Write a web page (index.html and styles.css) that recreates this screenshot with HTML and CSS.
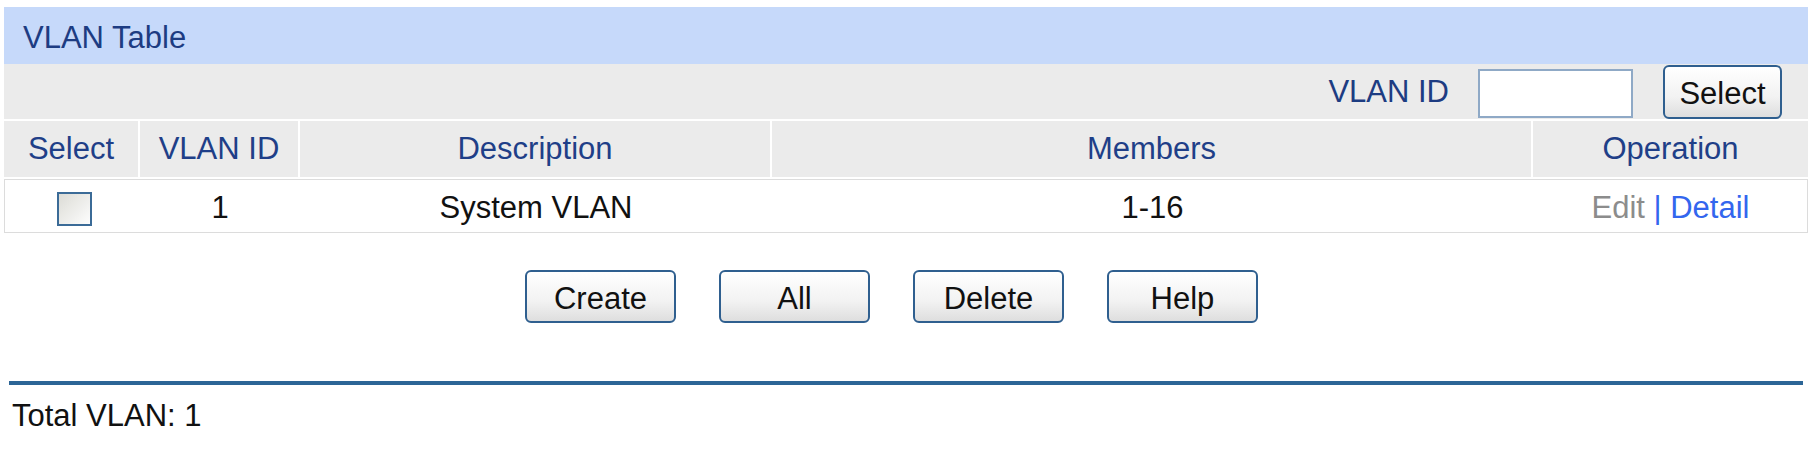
FILE: index.html
```html
<!DOCTYPE html>
<html>
<head>
    <title>VLAN Table</title>
    <meta charset="UTF-8">
    <link rel="stylesheet" href="styles.css">
</head>
<body>
    <div class="panel">
        <div class="title">VLAN Table</div>

        <div class="search">
            <label for="vlan-id" class="search-label">VLAN ID</label>
            <input type="text" id="vlan-id" class="search-input">
            <button class="btn btn-select">Select</button>
        </div>

        <div class="grid head">
            <div>Select</div>
            <div>VLAN ID</div>
            <div>Description</div>
            <div>Members</div>
            <div>Operation</div>
        </div>

        <div class="grid row">
            <div><span class="check"></span></div>
            <div>1</div>
            <div>System VLAN</div>
            <div>1-16</div>
            <div class="ops"><span class="edit">Edit</span> <span class="sep">|</span> <a class="detail">Detail</a></div>
        </div>
    </div>

    <div class="actions">
        <button class="btn">Create</button>
        <button class="btn">All</button>
        <button class="btn">Delete</button>
        <button class="btn">Help</button>
    </div>

    <hr class="rule">
    <div class="total">Total VLAN: 1</div>
</body>
</html>
```

FILE: styles.css
```css
body {
    margin: 0;
    background-color: #fff;
    font-family: "Liberation Sans", Arial, sans-serif;
    font-size: 31px;
    color: #111;
}
.panel {
    margin: 7px 7px 0 4px;
}
.title {
    height: 57px;
    line-height: 57px;
    padding: 2px 0 0 19px;
    box-sizing: border-box;
    background-color: #c6d9fa;
    color: #1d3c82;
}
.search {
    height: 55px;
    display: flex;
    align-items: center;
    justify-content: flex-end;
    padding-right: 26px;
    background-color: #ebebeb;
}
.search-label {
    color: #1d3c82;
    margin-right: 29px;
}
.search-input {
    width: 155px;
    height: 49px;
    box-sizing: border-box;
    margin: 3px 30px 0 0;
    border: 2px solid #8fa9c6;
    background: #fff;
}
.btn {
    height: 53px;
    width: 151px;
    padding: 5px 0 0;
    border: 2px solid #2f5f8f;
    border-radius: 6px;
    background: linear-gradient(#ffffff, #f2f2f2 60%, #dedede);
    font-family: "Liberation Sans", Arial, sans-serif;
    font-size: 31px;
    color: #111;
    cursor: pointer;
}
.btn-select {
    width: 119px;
    height: 54px;
}
.grid {
    display: grid;
    grid-template-columns: 134px 158px 470px 759px 1fr;
    text-align: center;
}
.head {
    margin-top: 2px;
    column-gap: 2px;
    color: #1f3f88;
}
.head div {
    height: 56px;
    line-height: 56px;
    background-color: #ebebeb;
}
.row {
    margin-top: 2px;
    height: 54px;
    box-sizing: border-box;
    border: 1px solid #dcdcdc;
    column-gap: 2px;
    align-items: center;
}
.row div {
    padding-top: 3px;
}
.check {
    display: inline-block;
    width: 35px;
    height: 34px;
    box-sizing: border-box;
    margin: 2px 0 0 4px;
    border: 2px solid #3b6b97;
    background: linear-gradient(135deg, #dcdcd6, #fdfdfd);
    vertical-align: middle;
}
.edit {
    color: #8c8c8c;
}
.sep,
.detail {
    color: #3366ee;
}
.actions {
    display: flex;
    justify-content: center;
    gap: 43px;
    margin-top: 37px;
    padding-right: 32px;
}
.rule {
    margin: 58px 12px 0 9px;
    height: 4px;
    border: none;
    background-color: #2c6596;
}
.total {
    margin: 14px 0 0 12px;
    line-height: 34px;
}
```
